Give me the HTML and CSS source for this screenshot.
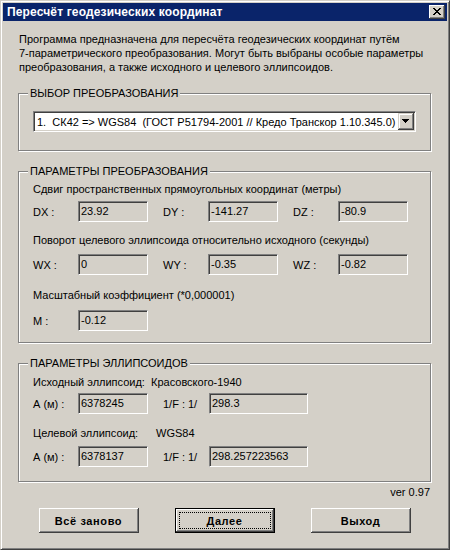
FILE: index.html
```html
<!DOCTYPE html>
<html lang="ru">
<head>
<meta charset="utf-8">
<title>Пересчёт геодезических координат</title>
<link rel="stylesheet" href="styles.css">
</head>
<body>
<div class="window">
  <div class="titlebar">
    <span class="title">Пересчёт геодезических координат</span>
    <span class="close" aria-label="Закрыть">
      <svg width="8" height="7" viewBox="0 0 8 7" shape-rendering="crispEdges">
        <path d="M0 0h2v1H0zM6 0h2v1H6zM1 1h2v1H1zM5 1h2v1H5zM2 2h4v1H2zM3 3h2v1H3zM2 4h4v1H2zM1 5h2v1H1zM5 5h2v1H5zM0 6h2v1H0zM6 6h2v1H6z" fill="#000"/>
      </svg>
    </span>
  </div>
  <div class="content">
    <p class="intro">Программа предназначена для пересчёта геодезических координат путём<br>7-параметрического преобразования. Могут быть выбраны особые параметры<br>преобразования, а также исходного и целевого эллипсоидов.</p>

    <fieldset class="group g1">
      <legend>ВЫБОР ПРЕОБРАЗОВАНИЯ</legend>
      <div class="combo">
        <span class="combo-text">1.  СК42 =&gt; WGS84  (ГОСТ Р51794-2001 // Кредо Транскор 1.10.345.0)</span>
        <span class="combo-btn">
          <svg width="7" height="4" viewBox="0 0 7 4" shape-rendering="crispEdges"><path d="M0 0h7v1H0zM1 1h5v1H1zM2 2h3v1H2zM3 3h1v1H3z" fill="#000"/></svg>
        </span>
      </div>
    </fieldset>

    <fieldset class="group g2">
      <legend>ПАРАМЕТРЫ ПРЕОБРАЗОВАНИЯ</legend>
      <div class="text t1">Сдвиг пространственных прямоугольных координат (метры)</div>
      <div class="row r1">
        <div class="pair"><span class="lbl">DX :</span><span class="field">23.92</span></div>
        <div class="pair"><span class="lbl">DY :</span><span class="field">-141.27</span></div>
        <div class="pair"><span class="lbl">DZ :</span><span class="field">-80.9</span></div>
      </div>
      <div class="text t2">Поворот целевого эллипсоида относительно исходного (секунды)</div>
      <div class="row r2">
        <div class="pair"><span class="lbl">WX :</span><span class="field">0</span></div>
        <div class="pair"><span class="lbl">WY :</span><span class="field">-0.35</span></div>
        <div class="pair"><span class="lbl">WZ :</span><span class="field">-0.82</span></div>
      </div>
      <div class="text t3">Масштабный коэффициент (*0,000001)</div>
      <div class="row r3">
        <div class="pair"><span class="lbl">M :</span><span class="field">-0.12</span></div>
      </div>
    </fieldset>

    <fieldset class="group g3">
      <legend>ПАРАМЕТРЫ ЭЛЛИПСОИДОВ</legend>
      <div class="text e1"><span class="ename src">Исходный эллипсоид:</span><span>Красовского-1940</span></div>
      <div class="row er1">
        <div class="pair"><span class="lbl">А (м) :</span><span class="field">6378245</span></div>
        <div class="inv"><span class="flbl">1/F :</span><span class="one">1/</span><span class="field wide">298.3</span></div>
      </div>
      <div class="text e2"><span class="ename dst">Целевой эллипсоид:</span><span>WGS84</span></div>
      <div class="row er2">
        <div class="pair"><span class="lbl">А (м) :</span><span class="field">6378137</span></div>
        <div class="inv"><span class="flbl">1/F :</span><span class="one">1/</span><span class="field wide">298.257223563</span></div>
      </div>
    </fieldset>

    <div class="ver">ver 0.97</div>

    <div class="buttons">
      <button class="btn" type="button">Всё заново</button>
      <button class="btn default" type="button"><span class="focus">Далее</span></button>
      <button class="btn" type="button">Выход</button>
    </div>
  </div>
</div>
</body>
</html>
```

FILE: styles.css
```css
html, body {
  margin: 0;
  padding: 0;
  background: #d4d0c8;
}

.window {
  width: 450px;
  height: 550px;
  box-sizing: border-box;
  background: #d4d0c8;
  border: 1px solid;
  border-color: #d4d0c8 #404040 #404040 #d4d0c8;
  box-shadow: inset 1px 1px 0 #ffffff, inset -1px -1px 0 #808080;
  padding: 2px;
  font-family: "Liberation Sans", Arial, sans-serif;
  font-size: 11px;
  line-height: 14px;
  color: #000;
}

.titlebar {
  height: 18px;
  background: #0a246a;
  display: flex;
  align-items: center;
  justify-content: space-between;
  padding: 0 2px 0 4px;
}

.title {
  color: #fff;
  font-weight: bold;
  font-size: 12px;
  letter-spacing: 0.15px;
}

.close {
  width: 16px;
  height: 14px;
  box-sizing: border-box;
  background: #d4d0c8;
  box-shadow: inset -1px -1px 0 #404040, inset 1px 1px 0 #ffffff, inset -2px -2px 0 #808080;
  display: flex;
  align-items: center;
  justify-content: center;
  padding: 0 1px 1px 0;
}

.close svg { display: block; }

.content {
  padding: 0 16px 0 15px;
}

.intro {
  margin: 11px 0 0 1px;
}

.group {
  margin: 0;
  padding: 0 14px;
  min-inline-size: 0;
  border: 1px solid #808080;
  box-shadow: inset 1px 1px 0 #ffffff, 1px 1px 0 #ffffff;
}

.group legend {
  padding: 0 2px;
  margin-left: -5px;
  line-height: 13px;
  background: #d4d0c8;
}

.g1 { margin-top: 13px; padding-top: 11px; padding-bottom: 18px; }
.g2 { margin-top: 14px; padding-top: 4px; padding-bottom: 11px; }
.g3 { margin-top: 14px; padding-top: 5px; padding-bottom: 14px; }

.combo {
  height: 21px;
  box-sizing: border-box;
  background: #fff;
  display: flex;
  align-items: center;
  border: 1px solid;
  border-color: #808080 #ffffff #ffffff #808080;
  box-shadow: inset 1px 1px 0 #404040, inset -1px -1px 0 #d4d0c8;
  padding: 1px;
}

.combo-text {
  flex: 1;
  white-space: pre;
  padding-left: 2px;
  overflow: hidden;
}

.combo-btn {
  width: 16px;
  height: 17px;
  flex: none;
  box-sizing: border-box;
  background: #d4d0c8;
  box-shadow: inset -1px -1px 0 #404040, inset 1px 1px 0 #d4d0c8, inset -2px -2px 0 #808080, inset 2px 2px 0 #ffffff;
  display: flex;
  align-items: center;
  justify-content: center;
  padding: 0 1px 1px 0;
}

.combo-btn svg { display: block; }

.row {
  display: flex;
  align-items: center;
  height: 21px;
}

.pair {
  display: flex;
  align-items: center;
  width: 130px;
  flex: none;
}

.lbl {
  width: 45px;
  flex: none;
}

.field {
  width: 70px;
  height: 21px;
  box-sizing: border-box;
  flex: none;
  border: 1px solid;
  border-color: #808080 #ffffff #ffffff #808080;
  box-shadow: inset 1px 1px 0 #404040, inset -1px -1px 0 #d4d0c8;
  padding: 0 2px;
  line-height: 19px;
  white-space: nowrap;
  overflow: hidden;
}

.field.wide { width: 99px; }

.inv {
  display: flex;
  align-items: center;
  flex: none;
}

.flbl { width: 25px; flex: none; }
.one { width: 21px; flex: none; }

.r1 { margin-top: 5px; }
.t2 { margin-top: 11px; }
.r2 { margin-top: 7px; }
.t3 { margin-top: 13px; }
.r3 { margin-top: 8px; }

.er1 { margin-top: 4px; }
.e2 { margin-top: 12px; }
.er2 { margin-top: 6px; }

.ename { display: inline-block; }
.ename.src { width: 118px; }
.ename.dst { width: 123px; }

.ver {
  margin-top: 3px;
  text-align: right;
  padding-right: 1px;
}

.buttons {
  margin-top: 9px;
  display: flex;
  justify-content: center;
  gap: 36px;
}

.btn {
  width: 100px;
  height: 25px;
  box-sizing: border-box;
  margin: 0;
  padding: 0;
  border: none;
  background: #d4d0c8;
  box-shadow: inset -1px -1px 0 #404040, inset 1px 1px 0 #ffffff, inset -2px -2px 0 #808080, inset 2px 2px 0 #d4d0c8;
  font-family: "Liberation Sans", Arial, sans-serif;
  font-weight: bold;
  font-size: 11px;
  letter-spacing: 0.6px;
  color: #000;
}

.btn.default {
  border: 1px solid #000;
  padding: 3px;
  display: flex;
}

.btn.default .focus {
  flex: 1;
  border: 1px dotted #000;
  display: flex;
  align-items: center;
  justify-content: center;
}
```
